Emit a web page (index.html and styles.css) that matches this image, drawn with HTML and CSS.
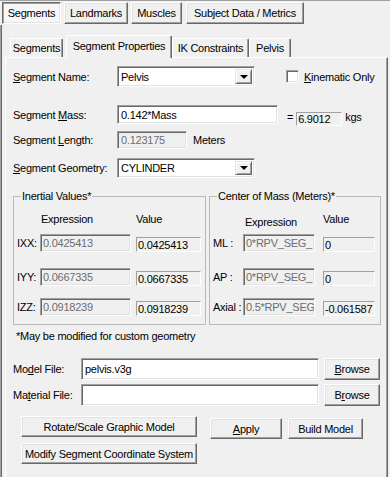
FILE: index.html
```html
<!DOCTYPE html>
<html lang="en">
<head>
    <meta charset="UTF-8">
    <title>Segment Properties</title>
    <link rel="stylesheet" href="styles.css">
</head>
<body>
    <div class="dialog">
        <!-- top level tabs (button style) -->
        <div class="top-tabs">
            <div class="ttab selected t-seg">Segments</div>
            <div class="ttab t-land">Landmarks</div>
            <div class="ttab t-mus">Muscles</div>
            <div class="ttab t-subj">Subject Data / Metrics</div>
        </div>

        <div class="outer-panel">
            <div class="sub-tabs">
                <div class="stab s1">Segments</div>
                <div class="stab s2 selected">Segment Properties</div>
                <div class="stab s3">IK Constraints</div>
                <div class="stab s4">Pelvis</div>
            </div>

            <div class="pane">
                <div class="row row-name">
                    <div class="lbl"><u>S</u>egment Name:</div>
                    <div class="combo">
                        <span class="combo-text">Pelvis</span>
                        <span class="drop"><span class="arrow"></span></span>
                    </div>
                    <span class="check"></span>
                    <span class="check-lbl"><u>K</u>inematic Only</span>
                </div>

                <div class="row row-mass">
                    <div class="lbl">Segment <u>M</u>ass:</div>
                    <div class="edit mass-input">0.142*Mass</div>
                    <span class="eq">=</span>
                    <div class="static mass-val">6.9012</div>
                    <span class="unit">kgs</span>
                </div>

                <div class="row row-length">
                    <div class="lbl">Segment <u>L</u>ength:</div>
                    <div class="edit disabled len-input">0.123175</div>
                    <span class="meters">Meters</span>
                </div>

                <div class="row row-geom">
                    <div class="lbl"><u>S</u>egment Geometry:</div>
                    <div class="combo">
                        <span class="combo-text">CYLINDER</span>
                        <span class="drop"><span class="arrow"></span></span>
                    </div>
                </div>

                <div class="groups">
                    <fieldset class="group inertial">
                        <legend>Inertial Values*</legend>
                        <div class="ghead">
                            <span class="h-exp">Expression</span>
                            <span class="h-val">Value</span>
                        </div>
                        <div class="grow r1">
                            <span class="glbl">IXX:</span>
                            <div class="edit disabled gexp">0.0425413</div>
                            <div class="static gval">0.0425413</div>
                        </div>
                        <div class="grow r2">
                            <span class="glbl">IYY:</span>
                            <div class="edit disabled gexp">0.0667335</div>
                            <div class="static gval">0.0667335</div>
                        </div>
                        <div class="grow r3">
                            <span class="glbl">IZZ:</span>
                            <div class="edit disabled gexp">0.0918239</div>
                            <div class="static gval">0.0918239</div>
                        </div>
                    </fieldset>

                    <fieldset class="group com">
                        <legend>Center of Mass (Meters)*</legend>
                        <div class="ghead">
                            <span class="h-exp">Expression</span>
                            <span class="h-val">Value</span>
                        </div>
                        <div class="grow r1">
                            <span class="glbl">ML :</span>
                            <div class="edit disabled gexp">0*RPV_SEG_</div>
                            <div class="static gval">0</div>
                        </div>
                        <div class="grow r2">
                            <span class="glbl">AP :</span>
                            <div class="edit disabled gexp">0*RPV_SEG_</div>
                            <div class="static gval">0</div>
                        </div>
                        <div class="grow r3">
                            <span class="glbl">Axial :</span>
                            <div class="edit disabled gexp">0.5*RPV_SEG</div>
                            <div class="static gval">-0.061587</div>
                        </div>
                    </fieldset>
                </div>

                <div class="note">*May be modified for custom geometry</div>

                <div class="row row-file model">
                    <div class="flbl">Mo<u>d</u>el File:</div>
                    <div class="edit file-input">pelvis.v3g</div>
                    <button class="btn browse"><u>B</u>rowse</button>
                </div>
                <div class="row row-file material">
                    <div class="flbl">Ma<u>t</u>erial File:</div>
                    <div class="edit file-input"></div>
                    <button class="btn browse">B<u>r</u>owse</button>
                </div>

                <div class="actions">
                    <div class="act-left">
                        <button class="btn wide">Rotate/Scale Graphic Model</button>
                        <button class="btn wide">Modify Segment Coordinate System</button>
                    </div>
                    <button class="btn apply"><u>A</u>pply</button>
                    <button class="btn build">Build Model</button>
                </div>
            </div>
        </div>
    </div>
</body>
</html>
```

FILE: styles.css
```css
/* Reset */
* {
    box-sizing: border-box;
}

body {
    margin: 0;
    padding: 0;
    background-color: #f0f0f0;
    font-family: "Liberation Sans", Arial, sans-serif;
    font-size: 11px;
    letter-spacing: -0.25px;
    color: #000;
}

u {
    text-decoration: underline;
    text-underline-offset: 1px;
}

.dialog {
    width: 390px;
    height: 477px;
    overflow: hidden;
    border-top: 1px solid #a0a0a0;
}

/* Top tabs (button style) */
.top-tabs {
    display: flex;
    height: 24px;
    padding: 1px 0 0 2px;
}

.ttab {
    height: 22px;
    line-height: 20px;
    text-align: center;
    background-color: #f0f0f0;
    border: 1px solid;
    border-color: #fff #696969 #696969 #fff;
    box-shadow: inset -1px -1px #a0a0a0, inset 1px 1px #e3e3e3;
}

.ttab.selected {
    background-color: #f7f7f7;
    border-color: #696969 #fff #fff #696969;
    box-shadow: inset 1px 1px #a0a0a0, inset -1px -1px #e3e3e3;
    line-height: 21px;
}

.t-seg { width: 59px; }
.t-land { width: 64px; margin-left: 3px; }
.t-mus { width: 51px; margin-left: 3px; }
.t-subj { width: 118px; margin-left: 4px; }

/* Outer panel */
.outer-panel {
    height: 452px;
    padding-top: 10px;
    border-left: 1px solid #a0a0a0;
    box-shadow: inset 1px 0 #696969;
}

/* Sub tabs */
.sub-tabs {
    display: flex;
    align-items: flex-end;
    height: 22px;
    margin-left: 4px;
}

.stab {
    height: 19px;
    line-height: 18px;
    text-align: center;
    border-top: 1px solid #fff;
    border-left: 1px solid #fff;
    border-right: 1px solid #696969;
    box-shadow: inset -1px 0 #a0a0a0;
    border-radius: 2px 2px 0 0;
}

.stab.selected {
    position: relative;
    z-index: 1;
    height: 23px;
    line-height: 20px;
    margin-bottom: -1px;
    background-color: #f0f0f0;
}

.s1 { width: 53px; margin-left: 5px; }
.s2 { width: 106px; margin-left: 3px; }
.s3 { width: 77px; }
.s4 { width: 42px; }

/* Main pane */
.pane {
    width: 383px;
    height: 430px;
    margin-left: 4px;
    padding-left: 7px;
    border-top: 1px solid #fff;
    border-left: 1px solid #fff;
    border-right: 1px solid #696969;
    box-shadow: inset -1px 0 #a0a0a0;
}

.row {
    display: flex;
    align-items: center;
}

.lbl {
    width: 104px;
}

/* Edit boxes */
.edit {
    height: 100%;
    padding: 0 3px;
    background-color: #fff;
    border: 1px solid;
    border-color: #a0a0a0 #fff #fff #a0a0a0;
    box-shadow: inset 1px 1px #696969, inset -1px -1px #e3e3e3;
    display: flex;
    align-items: center;
    white-space: nowrap;
    overflow: hidden;
}

.edit.disabled {
    background-color: #f0f0f0;
    color: #6d6d6d;
}

.static {
    padding: 0 1px;
    border: 1px solid;
    border-color: #a0a0a0 #fff #fff #a0a0a0;
    display: flex;
    align-items: center;
    white-space: nowrap;
    overflow: hidden;
}

/* Combo box */
.combo {
    width: 138px;
    height: 100%;
    padding: 2px 2px 2px 3px;
    background-color: #fff;
    border: 1px solid;
    border-color: #a0a0a0 #fff #fff #a0a0a0;
    box-shadow: inset 1px 1px #696969, inset -1px -1px #e3e3e3;
    display: flex;
    align-items: center;
}

.combo-text {
    flex: 1;
}

.drop {
    width: 17px;
    height: 100%;
    display: flex;
    align-items: center;
    justify-content: center;
    background-color: #f0f0f0;
    border: 1px solid;
    border-color: #e3e3e3 #696969 #696969 #e3e3e3;
    box-shadow: inset 1px 1px #fff, inset -1px -1px #a0a0a0;
}

.arrow {
    width: 0;
    height: 0;
    border-left: 4px solid transparent;
    border-right: 4px solid transparent;
    border-top: 4px solid #000;
}

/* Checkbox */
.check {
    width: 13px;
    height: 13px;
    margin-left: 31px;
    background-color: #fff;
    border: 1px solid;
    border-color: #a0a0a0 #fff #fff #a0a0a0;
    box-shadow: inset 1px 1px #696969, inset -1px -1px #e3e3e3;
}

.check-lbl {
    margin-left: 5px;
}

.row-name {
    height: 21px;
    margin-top: 8px;
}

.row-mass {
    height: 19px;
    margin-top: 18px;
}

.mass-input {
    width: 161px;
}

.eq {
    margin-left: 9px;
    margin-top: 4px;
}

.mass-val {
    width: 46px;
    height: 14px;
    margin-left: 3px;
    margin-top: 8px;
}

.unit {
    margin-left: 3px;
    margin-top: 4px;
}

.row-length {
    height: 18px;
    margin-top: 7px;
}

.len-input {
    width: 70px;
}

.meters {
    margin-left: 6px;
}

.row-geom {
    height: 20px;
    margin-top: 9px;
}

/* Group boxes */
.groups {
    display: flex;
    margin-top: 12px;
}

.group {
    margin: 0;
    padding: 0;
    height: 135px;
    border: 1px solid #b9b9b9;
}

.group legend {
    padding: 0 1px;
    margin-left: 7px;
    line-height: 13px;
}

.inertial {
    width: 193px;
}

.com {
    width: 172px;
    margin-left: 3px;
}

.ghead {
    display: flex;
    margin-top: 10px;
    height: 16px;
    line-height: 13px;
}

.inertial .h-exp {
    margin-left: 27px;
    width: 95px;
}

.com .h-exp {
    margin-left: 35px;
    width: 78px;
    margin-top: 3px;
}

.grow {
    display: flex;
    align-items: center;
    height: 18px;
}

.grow.r1 { margin-top: 5px; }
.grow.r2 { margin-top: 16px; }
.grow.r3 { margin-top: 12px; }

.glbl {
    padding-left: 3px;
    white-space: nowrap;
}

.gexp {
    padding: 0 2px;
}

.gval {
    height: 15px;
    align-self: flex-end;
}

.inertial .glbl { width: 26px; }
.inertial .gexp { width: 91px; }
.inertial .gval { width: 65px; margin-left: 5px; }

.com .glbl { width: 33px; }
.com .gexp { width: 72px; }
.com .gval { width: 52px; margin-left: 8px; }

.note {
    margin-top: 5px;
    padding-left: 3px;
    line-height: 13px;
}

/* File rows */
.row-file {
    height: 22px;
}

.model {
    margin-top: 15px;
}

.material {
    margin-top: 4px;
}

.flbl {
    width: 68px;
}

.file-input {
    width: 238px;
}

/* Buttons */
.btn {
    font-family: inherit;
    font-size: 11px;
    letter-spacing: -0.25px;
    color: #000;
    padding: 0;
    white-space: nowrap;
    background-color: #f0f0f0;
    border: 1px solid;
    border-color: #fff #696969 #696969 #fff;
    box-shadow: inset -1px -1px #a0a0a0, inset 1px 1px #e3e3e3;
}

.browse {
    width: 56px;
    height: 22px;
    margin-left: 5px;
}

.actions {
    display: flex;
    align-items: flex-start;
    margin-top: 10px;
}

.act-left {
    display: flex;
    flex-direction: column;
    gap: 6px;
    margin-left: 8px;
}

.wide {
    width: 176px;
    height: 21px;
}

.apply {
    width: 72px;
    height: 21px;
    margin-left: 13px;
    margin-top: 2px;
}

.build {
    width: 75px;
    height: 21px;
    margin-left: 6px;
    margin-top: 2px;
}
```
